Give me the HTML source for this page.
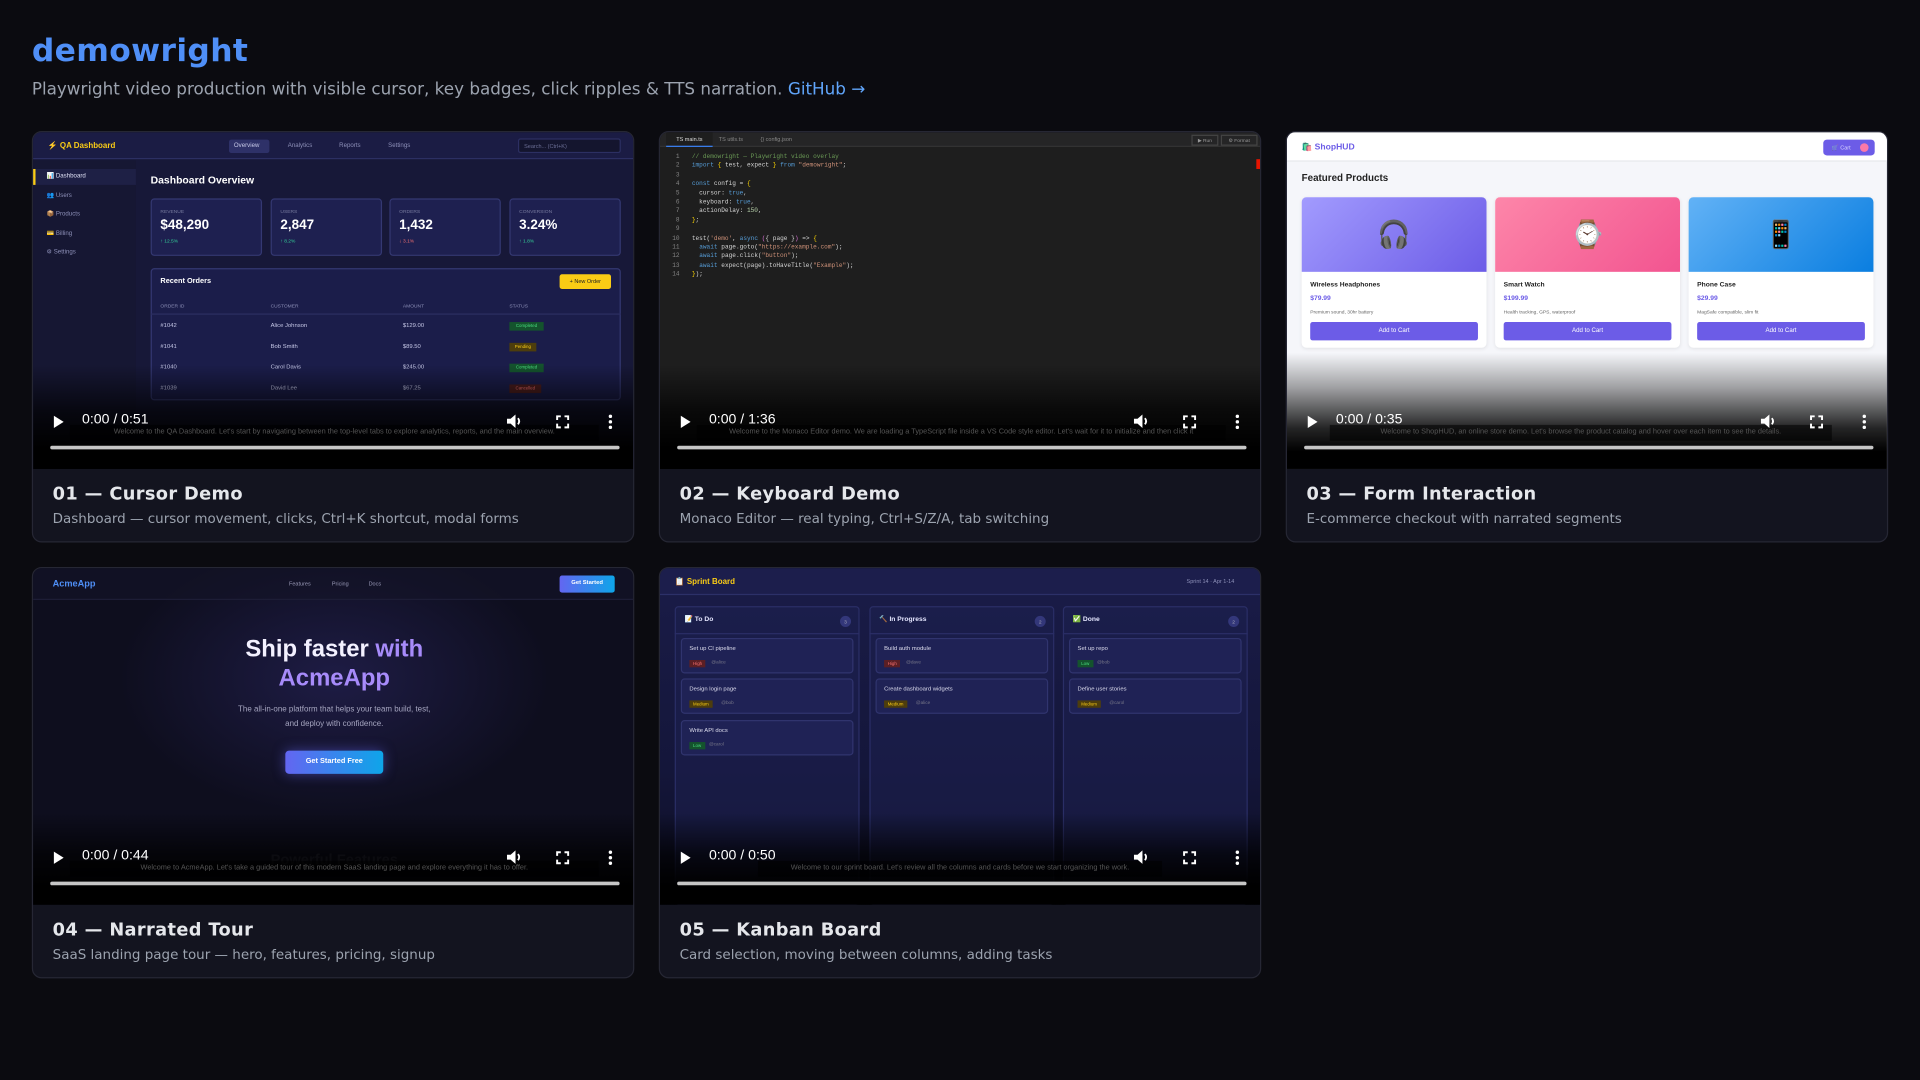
<!DOCTYPE html>
<html><head><meta charset="utf-8">
<style>
*{box-sizing:border-box;margin:0;padding:0}
html,body{width:1920px;height:1080px;overflow:hidden;background:#0b0b10}
body{font-family:"DejaVu Sans","Liberation Sans",sans-serif}
#w{position:absolute;left:0;top:0;width:1568px;height:882px;transform:scale(1.22449);transform-origin:0 0}
.abs{position:absolute}
h1{position:absolute;left:26px;top:27px;font-size:25.6px;font-weight:bold;color:#4f8ff7;letter-spacing:0.3px}
.sub{position:absolute;left:26px;top:65px;font-size:13.7px;color:#9ca3af}
.sub span{color:#60a5fa}
.card{position:absolute;width:492px;height:336px;background:#13141f;border:1px solid #262734;border-radius:8px;overflow:hidden}
.vid{position:absolute;left:0;top:0;width:492px;height:275px;overflow:hidden;font-family:"Liberation Sans",sans-serif}
.info{position:absolute;left:0;top:275px;width:492px;height:60px}
.info .t{position:absolute;left:16px;top:13px;font-size:14.5px;font-weight:bold;color:#e5e7eb;letter-spacing:0.3px}
.info .d{position:absolute;left:16px;top:34px;font-size:11px;color:#9ca3af}
.shade{position:absolute;left:0;right:0;top:190px;bottom:0;background:linear-gradient(rgba(0,0,0,0),rgba(0,0,0,.7) 45%,#000 80%)}
.ctl{position:absolute;left:0;top:0;width:492px;height:275px}
.ctl .tm{position:absolute;left:40px;top:229px;font-size:11.5px;color:#fff;font-family:"Liberation Sans",sans-serif}
.ctl .bar{position:absolute;left:14px;top:256px;width:465px;height:3px;background:#c6c6c6;border-radius:2px}
.ctl .cap{position:absolute;left:30px;top:239px;width:432px;height:13px;background:rgba(0,0,0,.55);font-size:6px;color:#555;text-align:center;line-height:13px;white-space:nowrap;overflow:hidden}
.ctl svg{position:absolute}
.mono{font-family:"Liberation Mono",monospace}
</style></head><body><div id="w">
<h1>demowright</h1>
<div class="sub">Playwright video production with visible cursor, key badges, click ripples &amp; TTS narration. <span>GitHub →</span></div>

<!-- CARD 1 -->
<div class="card" style="left:26px;top:107px">
<div class="vid" style="background:#171838">
 <div class="abs" style="left:0;top:0;width:492px;height:22px;background:#1b1c44;border-bottom:1px solid #2c2f62"></div>
 <div class="abs" style="left:12px;top:7px;font-size:6.5px;font-weight:bold;color:#facc15">⚡ QA Dashboard</div>
 <div class="abs" style="left:160px;top:6px;width:33px;height:11px;background:#2e3168;border-radius:2px"></div>
 <div class="abs" style="left:164px;top:8px;font-size:5px;color:#c7c9e8">Overview</div>
 <div class="abs" style="left:208px;top:8px;font-size:5px;color:#8d90b8">Analytics</div>
 <div class="abs" style="left:250px;top:8px;font-size:5px;color:#8d90b8">Reports</div>
 <div class="abs" style="left:290px;top:8px;font-size:5px;color:#8d90b8">Settings</div>
 <div class="abs" style="left:396px;top:5px;width:84px;height:12px;background:#14152e;border:1px solid #2c2f62;border-radius:2px;font-size:4.5px;color:#6c6f96;padding:3px 4px">Search... (Ctrl+K)</div>
 <div class="abs" style="left:0;top:23px;width:84px;height:252px;background:#161733"></div>
 <div class="abs" style="left:0;top:30px;width:84px;height:13px;background:#1e2045;border-left:2px solid #facc15"></div>
 <div class="abs" style="left:11px;top:33px;font-size:5px;color:#dfe1f5">📊 Dashboard</div>
 <div class="abs" style="left:11px;top:49px;font-size:5px;color:#8d90b8">👥 Users</div>
 <div class="abs" style="left:11px;top:64px;font-size:5px;color:#8d90b8">📦 Products</div>
 <div class="abs" style="left:11px;top:80px;font-size:5px;color:#8d90b8">💳 Billing</div>
 <div class="abs" style="left:11px;top:95px;font-size:5px;color:#8d90b8">⚙ Settings</div>
 <div class="abs" style="left:96px;top:34px;font-size:8.5px;font-weight:bold;color:#fff">Dashboard Overview</div>
 <div class="abs" style="left:96px;top:54px;width:91px;height:47px;background:#1e2050;border:1px solid #343872;border-radius:3px"></div>
 <div class="abs" style="left:194px;top:54px;width:91px;height:47px;background:#1e2050;border:1px solid #343872;border-radius:3px"></div>
 <div class="abs" style="left:291px;top:54px;width:91px;height:47px;background:#1e2050;border:1px solid #343872;border-radius:3px"></div>
 <div class="abs" style="left:389px;top:54px;width:91px;height:47px;background:#1e2050;border:1px solid #343872;border-radius:3px"></div>
 <div class="abs" style="left:104px;top:62px;font-size:4px;color:#777a9e">REVENUE</div>
 <div class="abs" style="left:104px;top:70px;font-size:11px;font-weight:bold;color:#fff">$48,290</div>
 <div class="abs" style="left:104px;top:86px;font-size:4px;color:#34d399">↑ 12.5%</div>
 <div class="abs" style="left:202px;top:62px;font-size:4px;color:#777a9e">USERS</div>
 <div class="abs" style="left:202px;top:70px;font-size:11px;font-weight:bold;color:#fff">2,847</div>
 <div class="abs" style="left:202px;top:86px;font-size:4px;color:#34d399">↑ 8.2%</div>
 <div class="abs" style="left:299px;top:62px;font-size:4px;color:#777a9e">ORDERS</div>
 <div class="abs" style="left:299px;top:70px;font-size:11px;font-weight:bold;color:#fff">1,432</div>
 <div class="abs" style="left:299px;top:86px;font-size:4px;color:#f87171">↓ 3.1%</div>
 <div class="abs" style="left:397px;top:62px;font-size:4px;color:#777a9e">CONVERSION</div>
 <div class="abs" style="left:397px;top:70px;font-size:11px;font-weight:bold;color:#fff">3.24%</div>
 <div class="abs" style="left:397px;top:86px;font-size:4px;color:#34d399">↑ 1.8%</div>
 <div class="abs" style="left:96px;top:111px;width:384px;height:108px;background:#1b1d4a;border:1px solid #343872;border-radius:3px"></div>
 <div class="abs" style="left:104px;top:119px;font-size:6px;font-weight:bold;color:#fff">Recent Orders</div>
 <div class="abs" style="left:430px;top:116px;width:42px;height:12px;background:#facc15;border-radius:2px;font-size:4.5px;color:#222;text-align:center;line-height:12px">+ New Order</div>
 <div class="abs" style="left:104px;top:139px;font-size:4px;color:#8d90b8">ORDER ID</div>
 <div class="abs" style="left:194px;top:139px;font-size:4px;color:#8d90b8">CUSTOMER</div>
 <div class="abs" style="left:302px;top:139px;font-size:4px;color:#8d90b8">AMOUNT</div>
 <div class="abs" style="left:389px;top:139px;font-size:4px;color:#8d90b8">STATUS</div>
 <div class="abs" style="left:96px;top:148px;width:384px;border-top:1px solid #2c2f62"></div>
 <div class="abs" style="left:104px;top:150px;font-size:4.8px;color:#c7c9e8;line-height:17px;width:60px">#1042<br>#1041<br>#1040<br>#1039</div>
 <div class="abs" style="left:194px;top:150px;font-size:4.8px;color:#c7c9e8;line-height:17px;width:80px">Alice Johnson<br>Bob Smith<br>Carol Davis<br>David Lee</div>
 <div class="abs" style="left:302px;top:150px;font-size:4.8px;color:#c7c9e8;line-height:17px;width:60px">$129.00<br>$89.50<br>$245.00<br>$67.25</div>
 <div class="abs" style="left:389px;top:155px;width:28px;height:7px;background:#14532d;color:#4ade80;font-size:3.6px;text-align:center;line-height:7px">Completed</div>
 <div class="abs" style="left:389px;top:172px;width:22px;height:7px;background:#4d3d0d;color:#facc15;font-size:3.6px;text-align:center;line-height:7px">Pending</div>
 <div class="abs" style="left:389px;top:189px;width:28px;height:7px;background:#14532d;color:#4ade80;font-size:3.6px;text-align:center;line-height:7px">Completed</div>
 <div class="abs" style="left:389px;top:206px;width:26px;height:7px;background:#4c1d1d;color:#f87171;font-size:3.6px;text-align:center;line-height:7px">Cancelled</div>
 <div class="shade"></div>
 <div class="ctl"><div class="tm">0:00 / 0:51</div><div class="cap">Welcome to the QA Dashboard. Let's start by navigating between the top-level tabs to explore analytics, reports, and the main overview.</div><div class="bar"></div>
 <svg style="left:16px;top:231px" width="10" height="11" viewBox="0 0 10 11"><path d="M1 0.5L9 5.5L1 10.5Z" fill="#fff"/></svg>
 <svg style="left:387px;top:230px" width="13" height="12" viewBox="0 0 13 12"><path d="M0 4H3L7 0.5V11.5L3 8H0Z" fill="#fff"/><path d="M9 3.5Q11 6 9 8.5" stroke="#fff" stroke-width="1.5" fill="none"/></svg>
 <svg style="left:427px;top:231px" width="11" height="11" viewBox="0 0 11 11" fill="none" stroke="#fff" stroke-width="1.6"><path d="M1 4V1H4M7 1H10V4M10 7V10H7M4 10H1V7"/></svg>
 <svg style="left:469px;top:230px" width="5" height="13" viewBox="0 0 5 13" fill="#fff"><circle cx="2.5" cy="2" r="1.4"/><circle cx="2.5" cy="6.5" r="1.4"/><circle cx="2.5" cy="11" r="1.4"/></svg></div>
</div>
<div class="info"><div class="t">01 — Cursor Demo</div><div class="d">Dashboard — cursor movement, clicks, Ctrl+K shortcut, modal forms</div></div>
</div>

<!-- CARD 2 -->
<div class="card" style="left:538px;top:107px">
<div class="vid" style="background:#1e1e1e">
 <div class="abs" style="left:0;top:0;width:492px;height:12px;background:#252526;border-bottom:1px solid #333"></div>
 <div class="abs" style="left:5px;top:0;width:38px;height:12px;background:#1e1e1e;border-bottom:1px solid #3b82f6;font-size:4.5px;color:#ddd;line-height:12px;text-align:center">TS main.ts</div>
 <div class="abs" style="left:48px;top:0;font-size:4.5px;color:#888;line-height:12px">TS utils.ts</div>
 <div class="abs" style="left:82px;top:0;font-size:4.5px;color:#888;line-height:12px">{} config.json</div>
 <div class="abs" style="left:434px;top:2px;width:22px;height:9px;border:1px solid #444;font-size:4px;color:#999;text-align:center;line-height:7px">▶ Run</div>
 <div class="abs" style="left:458px;top:2px;width:30px;height:9px;border:1px solid #444;font-size:4px;color:#999;text-align:center;line-height:7px">⚙ Format</div>
 <div class="abs mono" style="left:8px;top:17px;font-size:5px;line-height:7.4px;color:#858585;text-align:right;width:8px;white-space:pre">1
2
3
4
5
6
7
8
9
10
11
12
13
14</div>
 <div class="abs mono" style="left:26px;top:17px;font-size:5px;line-height:7.4px;color:#d4d4d4;white-space:pre"><span style="color:#6a9955">// demowright — Playwright video overlay</span>
<span style="color:#569cd6">import</span> <span style="color:#ffd700">{</span> test, expect <span style="color:#ffd700">}</span> <span style="color:#569cd6">from</span> <span style="color:#ce9178">"demowright"</span>;

<span style="color:#569cd6">const</span> config = <span style="color:#ffd700">{</span>
  cursor: <span style="color:#569cd6">true</span>,
  keyboard: <span style="color:#569cd6">true</span>,
  actionDelay: <span style="color:#b5cea8">150</span>,
<span style="color:#ffd700">}</span>;

test(<span style="color:#ce9178">'demo'</span>, <span style="color:#569cd6">async</span> <span style="color:#da70d6">(</span>{ page }<span style="color:#da70d6">)</span> =&gt; <span style="color:#ffd700">{</span>
  <span style="color:#569cd6">await</span> page.goto(<span style="color:#ce9178">"https://example.com"</span>);
  <span style="color:#569cd6">await</span> page.click(<span style="color:#ce9178">"button"</span>);
  <span style="color:#569cd6">await</span> expect(page).toHaveTitle(<span style="color:#ce9178">"Example"</span>);
<span style="color:#ffd700">}</span>);</div>
 <div class="abs" style="left:487px;top:22px;width:3px;height:8px;background:#e51400"></div>
 <div class="shade"></div>
 <div class="ctl"><div class="tm">0:00 / 1:36</div><div class="cap">Welcome to the Monaco Editor demo. We are loading a TypeScript file inside a VS Code style editor. Let's wait for it to initialize and then click it</div><div class="bar"></div>
 <svg style="left:16px;top:231px" width="10" height="11" viewBox="0 0 10 11"><path d="M1 0.5L9 5.5L1 10.5Z" fill="#fff"/></svg>
 <svg style="left:387px;top:230px" width="13" height="12" viewBox="0 0 13 12"><path d="M0 4H3L7 0.5V11.5L3 8H0Z" fill="#fff"/><path d="M9 3.5Q11 6 9 8.5" stroke="#fff" stroke-width="1.5" fill="none"/></svg>
 <svg style="left:427px;top:231px" width="11" height="11" viewBox="0 0 11 11" fill="none" stroke="#fff" stroke-width="1.6"><path d="M1 4V1H4M7 1H10V4M10 7V10H7M4 10H1V7"/></svg>
 <svg style="left:469px;top:230px" width="5" height="13" viewBox="0 0 5 13" fill="#fff"><circle cx="2.5" cy="2" r="1.4"/><circle cx="2.5" cy="6.5" r="1.4"/><circle cx="2.5" cy="11" r="1.4"/></svg></div>
</div>
<div class="info"><div class="t">02 — Keyboard Demo</div><div class="d">Monaco Editor — real typing, Ctrl+S/Z/A, tab switching</div></div>
</div>

<!-- CARD 3 -->
<div class="card" style="left:1050px;top:107px">
<div class="vid" style="background:#f5f6fa">
 <div class="abs" style="left:0;top:0;width:492px;height:24px;background:#fff;border-bottom:1px solid #e5e7eb"></div>
 <div class="abs" style="left:12px;top:8px;font-size:7px;font-weight:bold;color:#6c5ce7">🛍️ ShopHUD</div>
 <div class="abs" style="left:438px;top:6px;width:42px;height:13px;background:#6c5ce7;border-radius:3px;font-size:4.5px;color:#dcd8ff;line-height:13px;padding-left:7px">🛒 Cart</div>
 <div class="abs" style="left:468px;top:9px;width:7px;height:7px;border-radius:50%;background:#fd79a8"></div>
 <div class="abs" style="left:12px;top:33px;font-size:8px;font-weight:bold;color:#222">Featured Products</div>
 <div class="abs" style="left:12px;top:53px;width:151px;height:123px;background:#fff;border-radius:4px;box-shadow:0 1px 3px rgba(0,0,0,.08);overflow:hidden">
  <div style="height:61px;background:linear-gradient(135deg,#a29bfe,#6c5ce7);text-align:center;font-size:22px;line-height:61px">🎧</div>
  <div class="abs" style="left:7px;top:69px;font-size:5.5px;font-weight:bold;color:#222">Wireless Headphones</div>
  <div class="abs" style="left:7px;top:80px;font-size:5.5px;font-weight:bold;color:#6c5ce7">$79.99</div>
  <div class="abs" style="left:7px;top:91px;font-size:4px;color:#666">Premium sound, 30hr battery</div>
  <div class="abs" style="left:7px;top:102px;width:137px;height:15px;background:#6c5ce7;border-radius:2px;font-size:5px;color:#fff;text-align:center;line-height:15px">Add to Cart</div></div>
 <div class="abs" style="left:170px;top:53px;width:151px;height:123px;background:#fff;border-radius:4px;box-shadow:0 1px 3px rgba(0,0,0,.08);overflow:hidden">
  <div style="height:61px;background:linear-gradient(135deg,#fd86a9,#f25490);text-align:center;font-size:22px;line-height:61px">⌚</div>
  <div class="abs" style="left:7px;top:69px;font-size:5.5px;font-weight:bold;color:#222">Smart Watch</div>
  <div class="abs" style="left:7px;top:80px;font-size:5.5px;font-weight:bold;color:#6c5ce7">$199.99</div>
  <div class="abs" style="left:7px;top:91px;font-size:4px;color:#666">Health tracking, GPS, waterproof</div>
  <div class="abs" style="left:7px;top:102px;width:137px;height:15px;background:#6c5ce7;border-radius:2px;font-size:5px;color:#fff;text-align:center;line-height:15px">Add to Cart</div></div>
 <div class="abs" style="left:328px;top:53px;width:151px;height:123px;background:#fff;border-radius:4px;box-shadow:0 1px 3px rgba(0,0,0,.08);overflow:hidden">
  <div style="height:61px;background:linear-gradient(135deg,#62b2f6,#0a7ee0);text-align:center;font-size:22px;line-height:61px">📱</div>
  <div class="abs" style="left:7px;top:69px;font-size:5.5px;font-weight:bold;color:#222">Phone Case</div>
  <div class="abs" style="left:7px;top:80px;font-size:5.5px;font-weight:bold;color:#6c5ce7">$29.99</div>
  <div class="abs" style="left:7px;top:91px;font-size:4px;color:#666">MagSafe compatible, slim fit</div>
  <div class="abs" style="left:7px;top:102px;width:137px;height:15px;background:#6c5ce7;border-radius:2px;font-size:5px;color:#fff;text-align:center;line-height:15px">Add to Cart</div></div>
 <div class="shade" style="top:180px;background:linear-gradient(rgba(0,0,0,0),rgba(0,0,0,.35) 30%,rgba(0,0,0,.85) 65%,#000 85%)"></div>
 <div class="ctl"><div class="tm">0:00 / 0:35</div><div class="cap" style="left:35px;width:410px">Welcome to ShopHUD, an online store demo. Let's browse the product catalog and hover over each item to see the details.</div><div class="bar"></div>
 <svg style="left:16px;top:231px" width="10" height="11" viewBox="0 0 10 11"><path d="M1 0.5L9 5.5L1 10.5Z" fill="#fff"/></svg>
 <svg style="left:387px;top:230px" width="13" height="12" viewBox="0 0 13 12"><path d="M0 4H3L7 0.5V11.5L3 8H0Z" fill="#fff"/><path d="M9 3.5Q11 6 9 8.5" stroke="#fff" stroke-width="1.5" fill="none"/></svg>
 <svg style="left:427px;top:231px" width="11" height="11" viewBox="0 0 11 11" fill="none" stroke="#fff" stroke-width="1.6"><path d="M1 4V1H4M7 1H10V4M10 7V10H7M4 10H1V7"/></svg>
 <svg style="left:469px;top:230px" width="5" height="13" viewBox="0 0 5 13" fill="#fff"><circle cx="2.5" cy="2" r="1.4"/><circle cx="2.5" cy="6.5" r="1.4"/><circle cx="2.5" cy="11" r="1.4"/></svg></div>
</div>
<div class="info"><div class="t">03 — Form Interaction</div><div class="d">E-commerce checkout with narrated segments</div></div>
</div>

<!-- CARD 4 -->
<div class="card" style="left:26px;top:463px">
<div class="vid" style="background:radial-gradient(ellipse 220px 140px at 246px 90px,#1e1c45,#0e0e1e 80%)">
 <div class="abs" style="left:0;top:0;width:492px;height:26px;background:rgba(20,20,40,.6);border-bottom:1px solid #1d1d36"></div>
 <div class="abs" style="left:16px;top:8px;font-size:7.5px;font-weight:bold;color:#4f8ff7">AcmeApp</div>
 <div class="abs" style="left:209px;top:10px;font-size:4.5px;color:#9a9ab8">Features</div>
 <div class="abs" style="left:244px;top:10px;font-size:4.5px;color:#9a9ab8">Pricing</div>
 <div class="abs" style="left:274px;top:10px;font-size:4.5px;color:#9a9ab8">Docs</div>
 <div class="abs" style="left:430px;top:6px;width:45px;height:14px;border-radius:2px;background:linear-gradient(90deg,#6366f1,#0ea5e9);font-size:4.8px;font-weight:bold;color:#fff;text-align:center;line-height:14px">Get Started</div>
 <div class="abs" style="left:0;top:54px;width:492px;text-align:center;font-size:19.5px;font-weight:bold;line-height:24px;color:#f3f1ff">Ship faster <span style="color:#a78bfa">with</span><br><span style="color:#a78bfa">AcmeApp</span></div>
 <div class="abs" style="left:0;top:110px;width:492px;text-align:center;font-size:6.5px;line-height:12px;color:#a6a6c0">The all-in-one platform that helps your team build, test,<br>and deploy with confidence.</div>
 <div class="abs" style="left:206px;top:149px;width:80px;height:19px;border-radius:3px;background:linear-gradient(90deg,#6366f1,#0ea5e9);box-shadow:0 0 10px rgba(99,102,241,.5);font-size:6px;font-weight:bold;color:#fff;text-align:center;line-height:19px">Get Started Free</div>
 <div class="abs" style="left:0;top:231px;width:492px;text-align:center;font-size:12px;font-weight:bold;color:#2a2a3a">Powerful Features</div>
 <div class="shade" style="top:200px"></div>
 <div class="ctl"><div class="tm">0:00 / 0:44</div><div class="cap">Welcome to AcmeApp. Let's take a guided tour of this modern SaaS landing page and explore everything it has to offer.</div><div class="bar"></div>
 <svg style="left:16px;top:231px" width="10" height="11" viewBox="0 0 10 11"><path d="M1 0.5L9 5.5L1 10.5Z" fill="#fff"/></svg>
 <svg style="left:387px;top:230px" width="13" height="12" viewBox="0 0 13 12"><path d="M0 4H3L7 0.5V11.5L3 8H0Z" fill="#fff"/><path d="M9 3.5Q11 6 9 8.5" stroke="#fff" stroke-width="1.5" fill="none"/></svg>
 <svg style="left:427px;top:231px" width="11" height="11" viewBox="0 0 11 11" fill="none" stroke="#fff" stroke-width="1.6"><path d="M1 4V1H4M7 1H10V4M10 7V10H7M4 10H1V7"/></svg>
 <svg style="left:469px;top:230px" width="5" height="13" viewBox="0 0 5 13" fill="#fff"><circle cx="2.5" cy="2" r="1.4"/><circle cx="2.5" cy="6.5" r="1.4"/><circle cx="2.5" cy="11" r="1.4"/></svg></div>
</div>
<div class="info"><div class="t">04 — Narrated Tour</div><div class="d">SaaS landing page tour — hero, features, pricing, signup</div></div>
</div>

<!-- CARD 5 -->
<div class="card" style="left:538px;top:463px">
<div class="vid" style="background:linear-gradient(#1a1c48,#14163a 60%,#0c0d22)">
 <div class="abs" style="left:0;top:0;width:492px;height:22px;background:#1c1e4c;border-bottom:1px solid #2c3068"></div>
 <div class="abs" style="left:12px;top:7px;font-size:6.5px;font-weight:bold;color:#facc15">📋 Sprint Board</div>
 <div class="abs" style="left:430px;top:8px;font-size:4.5px;color:#8d90b8">Sprint 14 · Apr 1-14</div>
 <div class="abs" style="left:12px;top:31px;width:151px;height:244px;background:rgba(30,33,80,.55);border:1px solid #2a2e66;border-radius:3px"></div>
 <div class="abs" style="left:171px;top:31px;width:151px;height:244px;background:rgba(30,33,80,.55);border:1px solid #2a2e66;border-radius:3px"></div>
 <div class="abs" style="left:329px;top:31px;width:151px;height:244px;background:rgba(30,33,80,.55);border:1px solid #2a2e66;border-radius:3px"></div>
 <div class="abs" style="left:20px;top:39px;font-size:5.5px;font-weight:bold;color:#e5e7ff">📝 To Do</div>
 <div class="abs" style="left:179px;top:39px;font-size:5.5px;font-weight:bold;color:#e5e7ff">🔨 In Progress</div>
 <div class="abs" style="left:337px;top:39px;font-size:5.5px;font-weight:bold;color:#e5e7ff">✅ Done</div>
 <div class="abs" style="left:147px;top:39px;width:9px;height:9px;border-radius:50%;background:#33377a;font-size:4px;color:#aab;text-align:center;line-height:9px">3</div>
 <div class="abs" style="left:306px;top:39px;width:9px;height:9px;border-radius:50%;background:#33377a;font-size:4px;color:#aab;text-align:center;line-height:9px">2</div>
 <div class="abs" style="left:464px;top:39px;width:9px;height:9px;border-radius:50%;background:#33377a;font-size:4px;color:#aab;text-align:center;line-height:9px">2</div>
 <div class="abs" style="left:12px;top:53px;width:151px;border-top:1px solid #2a2e66"></div>
 <div class="abs" style="left:171px;top:53px;width:151px;border-top:1px solid #2a2e66"></div>
 <div class="abs" style="left:329px;top:53px;width:151px;border-top:1px solid #2a2e66"></div>
 <div class="abs" style="left:17px;top:57px;width:141px;height:29px;background:#1f2255;border:1px solid #30346e;border-radius:3px"><div class="abs" style="left:6px;top:6px;font-size:4.8px;color:#dde">Set up CI pipeline</div><div class="abs" style="left:6px;top:17px;height:6px;padding:0 3px;background:#5b1f24;color:#f87171;font-size:3.6px;line-height:6px">High</div><div class="abs" style="left:24px;top:17px;font-size:3.8px;color:#778">@alice</div></div>
 <div class="abs" style="left:17px;top:90px;width:141px;height:29px;background:#1f2255;border:1px solid #30346e;border-radius:3px"><div class="abs" style="left:6px;top:6px;font-size:4.8px;color:#dde">Design login page</div><div class="abs" style="left:6px;top:17px;height:6px;padding:0 3px;background:#4d3d0d;color:#facc15;font-size:3.6px;line-height:6px">Medium</div><div class="abs" style="left:32px;top:17px;font-size:3.8px;color:#778">@bob</div></div>
 <div class="abs" style="left:17px;top:124px;width:141px;height:29px;background:#1f2255;border:1px solid #30346e;border-radius:3px"><div class="abs" style="left:6px;top:6px;font-size:4.8px;color:#dde">Write API docs</div><div class="abs" style="left:6px;top:17px;height:6px;padding:0 3px;background:#14532d;color:#4ade80;font-size:3.6px;line-height:6px">Low</div><div class="abs" style="left:22px;top:17px;font-size:3.8px;color:#778">@carol</div></div>
 <div class="abs" style="left:176px;top:57px;width:141px;height:29px;background:#1f2255;border:1px solid #30346e;border-radius:3px"><div class="abs" style="left:6px;top:6px;font-size:4.8px;color:#dde">Build auth module</div><div class="abs" style="left:6px;top:17px;height:6px;padding:0 3px;background:#5b1f24;color:#f87171;font-size:3.6px;line-height:6px">High</div><div class="abs" style="left:24px;top:17px;font-size:3.8px;color:#778">@dave</div></div>
 <div class="abs" style="left:176px;top:90px;width:141px;height:29px;background:#1f2255;border:1px solid #30346e;border-radius:3px"><div class="abs" style="left:6px;top:6px;font-size:4.8px;color:#dde">Create dashboard widgets</div><div class="abs" style="left:6px;top:17px;height:6px;padding:0 3px;background:#4d3d0d;color:#facc15;font-size:3.6px;line-height:6px">Medium</div><div class="abs" style="left:32px;top:17px;font-size:3.8px;color:#778">@alice</div></div>
 <div class="abs" style="left:334px;top:57px;width:141px;height:29px;background:#1f2255;border:1px solid #30346e;border-radius:3px"><div class="abs" style="left:6px;top:6px;font-size:4.8px;color:#dde">Set up repo</div><div class="abs" style="left:6px;top:17px;height:6px;padding:0 3px;background:#14532d;color:#4ade80;font-size:3.6px;line-height:6px">Low</div><div class="abs" style="left:22px;top:17px;font-size:3.8px;color:#778">@bob</div></div>
 <div class="abs" style="left:334px;top:90px;width:141px;height:29px;background:#1f2255;border:1px solid #30346e;border-radius:3px"><div class="abs" style="left:6px;top:6px;font-size:4.8px;color:#dde">Define user stories</div><div class="abs" style="left:6px;top:17px;height:6px;padding:0 3px;background:#4d3d0d;color:#facc15;font-size:3.6px;line-height:6px">Medium</div><div class="abs" style="left:32px;top:17px;font-size:3.8px;color:#778">@carol</div></div>
 <div class="shade" style="top:200px"></div>
 <div class="ctl"><div class="tm">0:00 / 0:50</div><div class="cap" style="left:80px;width:330px">Welcome to our sprint board. Let's review all the columns and cards before we start organizing the work.</div><div class="bar"></div>
 <svg style="left:16px;top:231px" width="10" height="11" viewBox="0 0 10 11"><path d="M1 0.5L9 5.5L1 10.5Z" fill="#fff"/></svg>
 <svg style="left:387px;top:230px" width="13" height="12" viewBox="0 0 13 12"><path d="M0 4H3L7 0.5V11.5L3 8H0Z" fill="#fff"/><path d="M9 3.5Q11 6 9 8.5" stroke="#fff" stroke-width="1.5" fill="none"/></svg>
 <svg style="left:427px;top:231px" width="11" height="11" viewBox="0 0 11 11" fill="none" stroke="#fff" stroke-width="1.6"><path d="M1 4V1H4M7 1H10V4M10 7V10H7M4 10H1V7"/></svg>
 <svg style="left:469px;top:230px" width="5" height="13" viewBox="0 0 5 13" fill="#fff"><circle cx="2.5" cy="2" r="1.4"/><circle cx="2.5" cy="6.5" r="1.4"/><circle cx="2.5" cy="11" r="1.4"/></svg></div>
</div>
<div class="info"><div class="t">05 — Kanban Board</div><div class="d">Card selection, moving between columns, adding tasks</div></div>
</div>

</div></body></html>
